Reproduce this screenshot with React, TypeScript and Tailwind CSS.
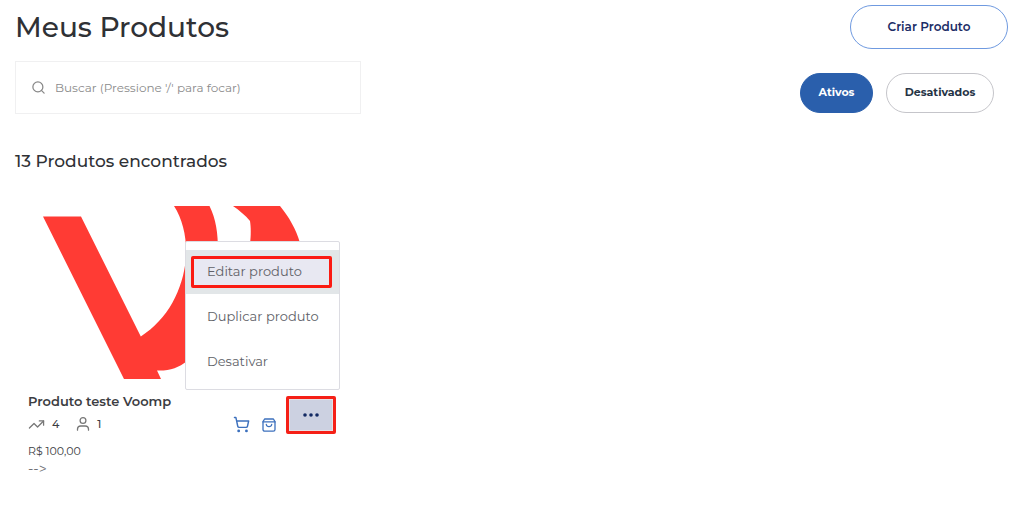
import { useState } from "react";
import { Search, ShoppingCart, TrendingUp } from "lucide-react";

type Product = {
  name: string;
  views: number;
  buyers: number;
  price: string;
};

const product: Product = {
  name: "Produto teste Voomp",
  views: 4,
  buyers: 1,
  price: "R$ 100,00",
};

function ProductCover() {
  return (
    <svg viewBox="0 0 308 173" className="block w-full" fill="#ff3b34" aria-hidden="true">
      <path d="M15 10.500H53L112.800 130.500C140 113 155 84 158 52C159 32 155 14 146 0H181.500C188 13 190 27 190 45C190 110 175 167 129 164.500L133 173H96Z" />
      <path d="M205 0H252C261 11 268 23 272 37C276 50 277 68 277 80H222V37C223 30 223 21 222 15C217 9 212 5 205 0Z" />
    </svg>
  );
}

function UserIcon() {
  return (
    <svg
      width="18"
      height="18"
      viewBox="0 0 18 18"
      fill="none"
      stroke="currentColor"
      strokeWidth="1.3"
      strokeLinecap="round"
      className="ml-[15px] text-[#777]"
    >
      <circle cx="9" cy="5.500" r="2.900" />
      <path d="M3.500 15.200V14A3.200 3.200 0 0 1 6.700 11H11.300A3.200 3.200 0 0 1 14.500 14V15.200" />
    </svg>
  );
}

function BagIcon() {
  return (
    <svg
      width="16"
      height="16"
      viewBox="0 0 16 16"
      fill="none"
      stroke="currentColor"
      strokeWidth="1.3"
      strokeLinecap="round"
      strokeLinejoin="round"
    >
      <path d="M3.600 2H12.400L14 4.700V12.500A1.700 1.700 0 0 1 12.300 14.200H3.700A1.700 1.700 0 0 1 2 12.500V4.700Z" />
      <path d="M2 4.900H14M5.300 7.500C5.800 10.400 10.200 10.400 10.700 7.500" />
    </svg>
  );
}

function DotsIcon() {
  return (
    <svg width="18" height="6" viewBox="0 0 18 6" fill="currentColor">
      <circle cx="3" cy="3" r="1.800" />
      <circle cx="9" cy="3" r="1.800" />
      <circle cx="15" cy="3" r="1.800" />
    </svg>
  );
}

function ProductMenu() {
  return (
    <div
      role="menu"
      className="absolute -right-1 bottom-full mb-[6px] w-[155px] rounded-xs border border-[#dcdce2] bg-white pt-2 pb-[5px] text-[13px] whitespace-nowrap text-[#606167]"
    >
      <button role="menuitem" className="block h-11 w-full bg-[#e2e6e8] px-[5px] text-left">
        <span className="flex h-8 w-[141px] items-center rounded-xs border-[3px] border-[#fb1b12] bg-[#e8e8f2] px-[13px]">
          Editar produto
        </span>
      </button>
      <button role="menuitem" className="block h-[45px] w-full px-[21px] text-left">
        Duplicar produto
      </button>
      <button role="menuitem" className="block h-[45px] w-full px-[21px] text-left">
        Desativar
      </button>
    </div>
  );
}

function ProductCard({ name, views, buyers, price }: Product) {
  const [open, setOpen] = useState(true);

  return (
    <article className="w-[308px] text-[#3c3d42]">
      <ProductCover />

      <div className="flex items-start pt-[13px]">
        <div className="flex-1">
          <h3 className="text-[13px] leading-[18px] font-semibold text-[#3c3d42]">{name}</h3>
          <div className="mt-1 flex items-center text-[11px] leading-5 font-medium">
            <TrendingUp size={17} strokeWidth={1.8} className="text-[#777]" />
            <span className="ml-[7px]">{views}</span>
            <UserIcon />
            <span className="ml-[5px]">{buyers}</span>
          </div>
        </div>

        <div className="mt-[24px] mr-[9px] flex items-center gap-[11px] text-[#3c70bd]">
          <a href="#carrinho" aria-label="Carrinho">
            <ShoppingCart size={17} strokeWidth={2} />
          </a>
          <a href="#checkout" aria-label="Checkout">
            <BagIcon />
          </a>
        </div>

        <div className="relative mt-1">
          <button
            aria-label="Mais opções"
            aria-haspopup="menu"
            aria-expanded={open}
            onClick={() => setOpen(!open)}
            className="flex h-[38px] w-[50px] items-center justify-center rounded-xs border-[3px] border-[#f52017] bg-[#ccd1e1] text-[#132a63] ring-1 ring-[#e3e1e6] ring-inset"
          >
            <DotsIcon />
          </button>
          {open && <ProductMenu />}
        </div>
      </div>

      <p className="mt-2 text-[11px] leading-[18px]">{price}</p>
      <p className="text-[14px] leading-[18px] text-[#707176]">{"-->"}</p>
    </article>
  );
}

export default function App() {
  const [active, setActive] = useState(true);

  return (
    <main className="min-h-screen bg-white pt-[5px] pr-4 pb-6 pl-[15px] font-['Montserrat',Inter,sans-serif] text-[#2f3135]">
      {/* HEADER */}
      <header className="flex items-center justify-between">
        <h1 className="text-[28px] leading-[44px] font-medium">Meus Produtos</h1>
        <button className="h-11 w-[158px] rounded-full border border-[#6f9ae0] text-[12px] font-semibold text-[#1c2d66]">
          Criar Produto
        </button>
      </header>

      {/* SEARCH AND FILTERS */}
      <div className="mt-3 flex items-center justify-between">
        <label className="flex h-[53px] w-[346px] items-center gap-[9px] border border-[#f0f0f1] px-[15px]">
          <Search size={15} strokeWidth={2} className="shrink-0 text-[#888]" />
          <input
            type="search"
            aria-label="Buscar"
            placeholder="Buscar (Pressione '/' para focar)"
            className="min-w-0 flex-1 text-[12px] outline-none placeholder:text-[#8b8b8b]"
          />
        </label>

        <div className="mt-[10px] mr-[14px] flex gap-[13px] text-[11px]">
          <button
            aria-pressed={active}
            onClick={() => setActive(true)}
            className={`h-10 w-[73px] rounded-full border font-bold ${
              active ? "border-[#2a5fac] bg-[#2a5fac] text-white" : "border-[#c5c5ca] text-[#253345]"
            }`}
          >
            Ativos
          </button>
          <button
            aria-pressed={!active}
            onClick={() => setActive(false)}
            className={`h-10 w-[108px] rounded-full border font-bold ${
              active ? "border-[#c5c5ca] text-[#253345]" : "border-[#2a5fac] bg-[#2a5fac] text-white"
            }`}
          >
            Desativados
          </button>
        </div>
      </div>

      {/* PRODUCTS */}
      <h2 className="mt-[35px] text-[17px] leading-6 font-medium">13 Produtos encontrados</h2>
      <section className="mt-[33px] ml-[13px]">
        <ProductCard {...product} />
      </section>
    </main>
  );
}
